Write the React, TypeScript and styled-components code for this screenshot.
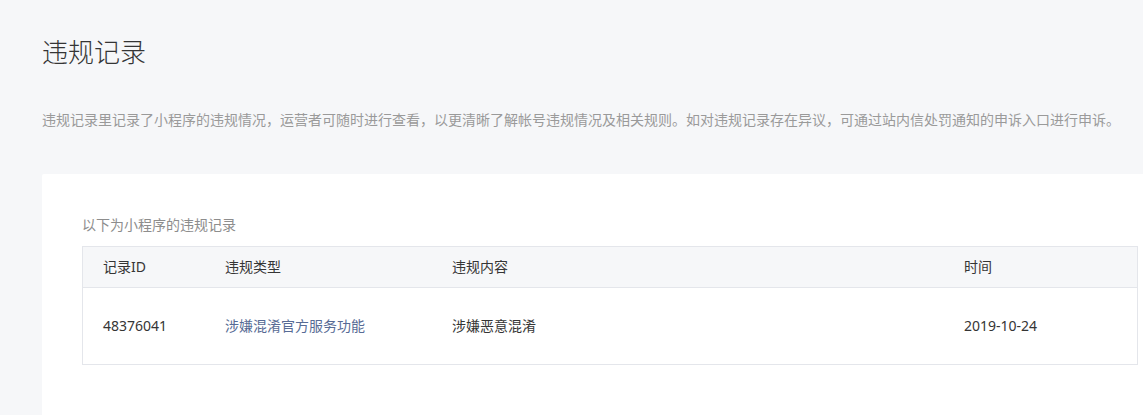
import { FC } from "react";
import styled, { createGlobalStyle } from "styled-components";

type TRecord = {
  id: string;
  type: string;
  content: string;
  date: string;
};

const records: TRecord[] = [
  {
    id: "48376041",
    type: "涉嫌混淆官方服务功能",
    content: "涉嫌恶意混淆",
    date: "2019-10-24",
  },
];

const GlobalStyle = createGlobalStyle`
  html, body {
    margin: 0;
    padding: 0;
    background: #f6f7f9;
    overflow: hidden;
  }
  body {
    font-family: "Noto Sans", "Noto Sans CJK SC", sans-serif;
    color: #353535;
  }
`;

const App: FC = () => {
  return (
    <>
      <GlobalStyle />
      <Page>
        <Title>违规记录</Title>
        <Desc>
          违规记录里记录了小程序的违规情况，运营者可随时进行查看，以更清晰了解帐号违规情况及相关规则。如对违规记录存在异议，可通过站内信处罚通知的申诉入口进行申诉。
        </Desc>
        <Card>
          <Label>以下为小程序的违规记录</Label>
          <Table>
            <HeadRow>
              <Cell>记录ID</Cell>
              <Cell>违规类型</Cell>
              <Cell>违规内容</Cell>
              <Cell>时间</Cell>
            </HeadRow>
            {records.map((r) => (
              <BodyRow key={r.id}>
                <Cell>{r.id}</Cell>
                <Cell>
                  <Link href="#">{r.type}</Link>
                </Cell>
                <Cell>{r.content}</Cell>
                <Cell>{r.date}</Cell>
              </BodyRow>
            ))}
          </Table>
        </Card>
      </Page>
    </>
  );
};

export default App;

const Page = styled.div`
  display: flex;
  flex-direction: column;
  padding: 34px 0 0 42px;
  width: 1136px;
`;

const Title = styled.h1`
  margin: 0;
  font-size: 26px;
  line-height: 36px;
  font-weight: 300;
  color: #353535;
`;

const Desc = styled.p`
  margin: 40px 0 0;
  font-size: 14px;
  line-height: 20px;
  color: #9a9a9a;
  white-space: nowrap;
`;

const Card = styled.div`
  display: flex;
  flex-direction: column;
  margin-top: 44px;
  padding: 41px 40px 60px;
  background: #ffffff;
  border-radius: 2px;
`;

const Label = styled.div`
  font-size: 14px;
  line-height: 20px;
  color: #8d8d8d;
`;

const Table = styled.div`
  display: flex;
  flex-direction: column;
  margin-top: 11px;
  border: 1px solid #e4e6eb;
`;

const Row = styled.div`
  display: grid;
  grid-template-columns: 122px 227px 512px 1fr;
  align-items: center;
`;

const HeadRow = styled(Row)`
  height: 40px;
  background: #f6f7f9;
  border-bottom: 1px solid #e4e6eb;
`;

const BodyRow = styled(Row)`
  height: 76px;
`;

const Cell = styled.div`
  padding-left: 20px;
  font-size: 14px;
  line-height: 20px;
  color: #353535;
`;

const Link = styled.a`
  color: #576b95;
  text-decoration: none;
`;
